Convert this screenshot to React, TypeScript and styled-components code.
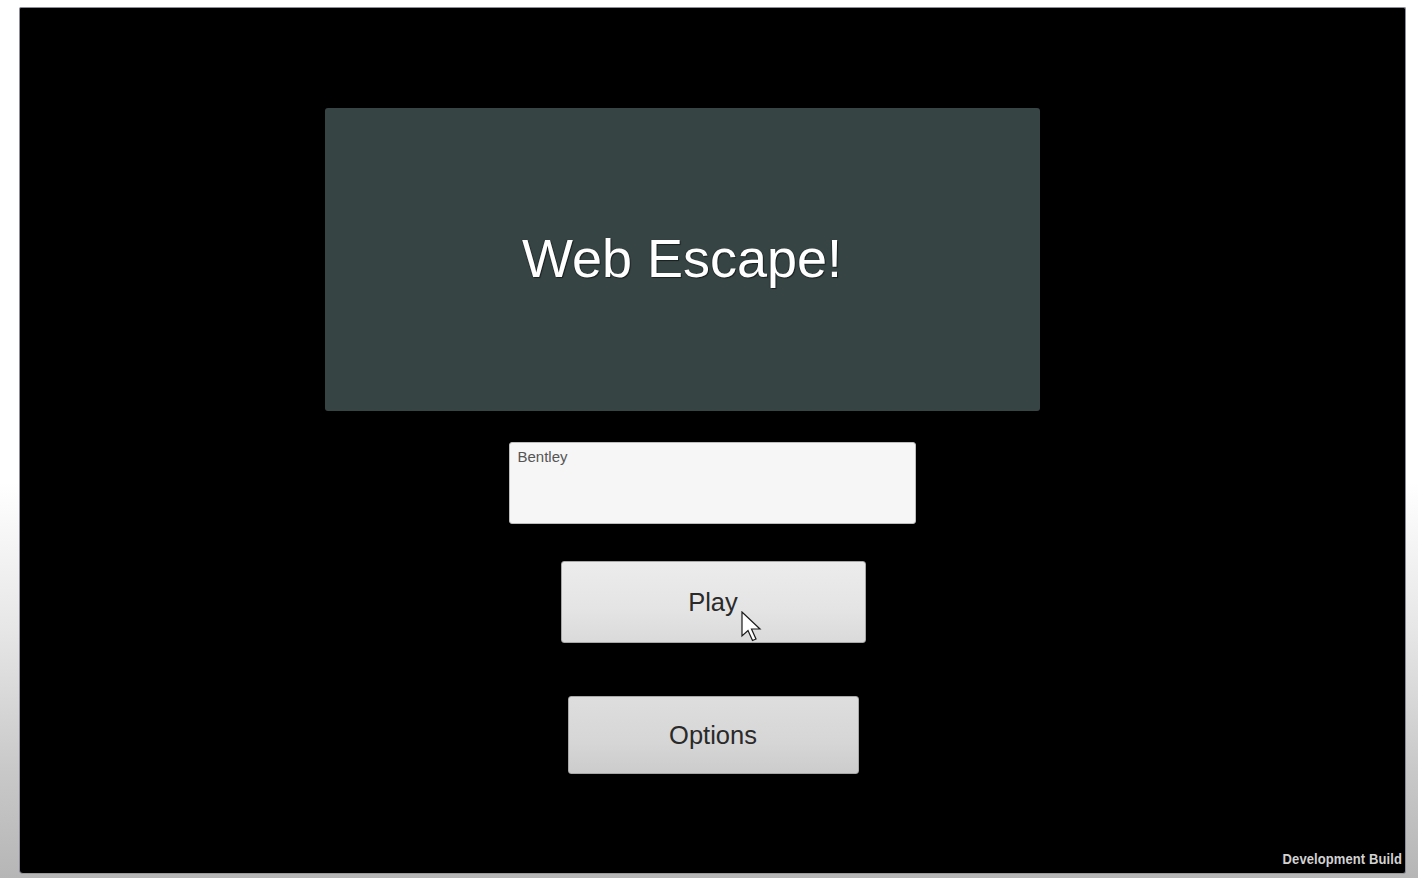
import React from "react";
import styled, { createGlobalStyle } from "styled-components";

const GlobalStyle = createGlobalStyle`
  html, body {
    margin: 0;
    padding: 0;
    width: 1418px;
    height: 878px;
    overflow: hidden;
    background: #ffffff;
  }
  * { box-sizing: border-box; }
`;

const Page = styled.div`
  width: 1418px;
  height: 878px;
  padding: 7px 12px 4px 19px;
  background: linear-gradient(
    to bottom,
    #ffffff 0%,
    #ffffff 55%,
    #e6e6e6 72%,
    #c8c8c8 88%,
    #b6b6b6 100%
  );
  font-family: "Liberation Sans", Arial, sans-serif;
`;

const GameCanvas = styled.div`
  position: relative;
  width: 100%;
  height: 100%;
  background: #000000;
  border: 1px solid #8c8c9c;
  border-bottom-color: #9a9a9a;
  border-radius: 2px 2px 3px 4px;
  display: flex;
  flex-direction: column;
  align-items: center;
  padding-top: 100px;
`;

const TitlePanel = styled.div`
  width: 715px;
  height: 303px;
  margin-right: 61px;
  background: #374444;
  border-radius: 3px;
  display: flex;
  align-items: center;
  justify-content: center;
`;

const Title = styled.h1`
  margin: 0 0 3px 0;
  font-family: "Liberation Sans", Arial, sans-serif;
  font-weight: 400;
  font-size: 54px;
  line-height: 1;
  color: #ffffff;
  text-shadow: 1px 1px 1px rgba(0, 0, 0, 0.55), -1px 0 1px rgba(0, 0, 0, 0.25);
`;

const NameField = styled.div`
  margin-top: 31px;
  margin-left: -1px;
  width: 407px;
  height: 82px;
  background: #f6f6f6;
  border: 1px solid #bdbdbd;
  border-radius: 3px;
  padding: 5px 8px;
  font-size: 15px;
  line-height: 17px;
  color: #555555;
`;

const MenuButton = styled.div<{ $w: number; $h: number; $mt: number; $hover?: boolean }>`
  position: relative;
  margin-top: ${(p) => p.$mt}px;
  margin-left: 1px;
  width: ${(p) => p.$w}px;
  height: ${(p) => p.$h}px;
  border-radius: 3px;
  border: 1px solid #a8a8a8;
  background: ${(p) =>
    p.$hover
      ? "linear-gradient(to bottom, #ececec 0%, #e4e4e4 60%, #dadada 100%)"
      : "linear-gradient(to bottom, #dedede 0%, #d6d6d6 60%, #cccccc 100%)"};
  display: flex;
  align-items: center;
  justify-content: center;
  font-size: 25.5px;
  color: #2a2a2a;
`;

const Cursor = styled.svg`
  position: absolute;
  left: 179px;
  top: 49px;
`;

const Watermark = styled.div`
  position: absolute;
  right: 3px;
  bottom: 6px;
  font-family: "Liberation Sans", Arial, sans-serif;
  font-weight: 700;
  font-size: 13px;
  letter-spacing: 0.1px;
  color: #d2d2d2;
  transform: scaleY(1.15);
  transform-origin: bottom right;
`;

export default function App() {
  return (
    <>
      <GlobalStyle />
      <Page>
        <GameCanvas>
          <TitlePanel>
            <Title>Web Escape!</Title>
          </TitlePanel>
          <NameField>Bentley</NameField>
          <MenuButton $w={305} $h={82} $mt={37} $hover>
            Play
            <Cursor width="22" height="31" viewBox="0 0 22 31">
              <path
                d="M1 1 L1 25 L7 19.5 L11.5 29.5 L15 28 L10.5 18 L19 18 Z"
                fill="#ffffff"
                stroke="#1a1a1a"
                strokeWidth="1.2"
                strokeLinejoin="miter"
              />
            </Cursor>
          </MenuButton>
          <MenuButton $w={291} $h={78} $mt={53}>
            Options
          </MenuButton>
          <Watermark>Development Build</Watermark>
        </GameCanvas>
      </Page>
    </>
  );
}
